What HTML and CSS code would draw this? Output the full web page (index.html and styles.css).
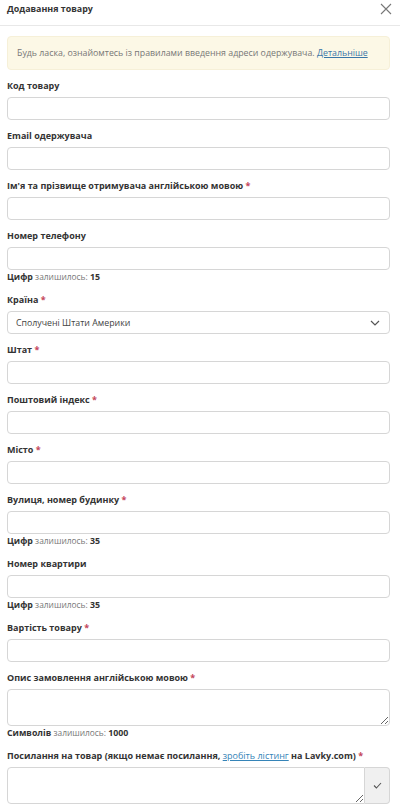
FILE: index.html
```html
<!DOCTYPE html>
<html lang="uk">
<head>
<meta charset="utf-8">
<title>Додавання товару</title>
<link rel="stylesheet" href="styles.css">
</head>
<body>
<div class="modal">
  <div class="modal-header">
    <div class="modal-title">Додавання товару</div>
    <button class="close" type="button" aria-label="Закрити">
      <svg width="12" height="12" viewBox="0 0 12 12"><path d="M1 1L11 11M11 1L1 11" stroke="#777" stroke-width="1.1" fill="none"/></svg>
    </button>
  </div>
  <div class="modal-body">
    <div class="alert">Будь ласка, ознайомтесь із правилами введення адреси одержувача. <a href="#">Детальніше</a></div>

    <div class="group">
      <label class="label">Код товару</label>
      <input class="input" type="text">
    </div>
    <div class="group">
      <label class="label">Email одержувача</label>
      <input class="input" type="text">
    </div>
    <div class="group">
      <label class="label">Ім'я та прізвище отримувача англійською мовою <span class="req">*</span></label>
      <input class="input" type="text">
    </div>
    <div class="group">
      <label class="label">Номер телефону</label>
      <input class="input" type="text">
      <div class="help"><b>Цифр</b> залишилось: <b>15</b></div>
    </div>
    <div class="group">
      <label class="label">Країна <span class="req">*</span></label>
      <div class="select">
        <span>Сполучені Штати Америки</span>
        <svg width="10" height="6" viewBox="0 0 10 6"><path d="M1 1L5 5L9 1" stroke="#555" stroke-width="1.2" fill="none"/></svg>
      </div>
    </div>
    <div class="group">
      <label class="label">Штат <span class="req">*</span></label>
      <input class="input" type="text">
    </div>
    <div class="group">
      <label class="label">Поштовий індекс <span class="req">*</span></label>
      <input class="input" type="text">
    </div>
    <div class="group">
      <label class="label">Місто <span class="req">*</span></label>
      <input class="input" type="text">
    </div>
    <div class="group">
      <label class="label">Вулиця, номер будинку <span class="req">*</span></label>
      <input class="input" type="text">
      <div class="help"><b>Цифр</b> залишилось: <b>35</b></div>
    </div>
    <div class="group">
      <label class="label">Номер квартири</label>
      <input class="input" type="text">
      <div class="help"><b>Цифр</b> залишилось: <b>35</b></div>
    </div>
    <div class="group">
      <label class="label">Вартість товару <span class="req">*</span></label>
      <input class="input" type="text">
    </div>
    <div class="group">
      <label class="label">Опис замовлення англійською мовою <span class="req">*</span></label>
      <textarea class="input area"></textarea>
      <div class="help"><b>Символів</b> залишилось: <b>1000</b></div>
    </div>
    <div class="group">
      <label class="label">Посилання на товар (якщо немає посилання, <a href="#" class="inline-link">зробіть лістинг</a> на Lavky.com) <span class="req">*</span></label>
      <div class="input-group">
        <textarea class="input area grouped"></textarea>
        <button class="addon" type="button">
          <svg width="9" height="7" viewBox="0 0 9 7"><path d="M1 3.5L3.4 6L8 1" stroke="#555" stroke-width="1.1" fill="none"/></svg>
        </button>
      </div>
    </div>
  </div>
</div>
</body>
</html>
```

FILE: styles.css
```css
* { box-sizing: border-box; }
html, body { margin: 0; padding: 0; background: #fff; }
body {
  font-family: "Open Sans", "Noto Sans", "DejaVu Sans", sans-serif;
  font-size: 9px;
  color: #333;
}
.modal-header {
  display: flex;
  align-items: flex-start;
  justify-content: space-between;
  height: 26px;
  padding: 1px 8px 0 7px;
  border-bottom: 1px solid #e8e8e8;
}
.modal-title {
  font-weight: 700;
  font-size: 8.9px;
  line-height: 16px;
  color: #333;
}
.close {
  border: 0;
  background: none;
  padding: 0;
  margin-top: 2px;
  width: 12px;
  height: 12px;
  display: flex;
}
.modal-body {
  padding: 10px 10px 0 7px;
}
.alert {
  background: #fcf8e6;
  border: 1px solid #f6f0d8;
  border-radius: 4px;
  padding: 9px 9px;
  line-height: 14px;
  font-size: 8.8px;
  color: #777;
  margin-bottom: 8px;
}
.alert a { color: #3a76a8; text-decoration: underline; }
.group {
  display: flex;
  flex-direction: column;
  margin-bottom: 8px;
}
.label {
  font-weight: 700;
  line-height: 16px;
  margin-bottom: 3px;
  color: #333;
}
.req { color: #c4455a; }
.inline-link {
  color: #3584b8;
  font-weight: 400;
  text-decoration: underline;
}
.input {
  display: block;
  width: 100%;
  height: 23px;
  border: 1px solid #d6d6d6;
  border-radius: 4px;
  background: #fff;
  font: inherit;
  padding: 2px 7px;
  margin: 0;
}
.area {
  height: 37px;
  resize: vertical;
}
.help {
  line-height: 14px;
  font-size: 8.4px;
  color: #777;
}
.help b { color: #333; font-weight: 700; font-size: 8.8px; }
.select {
  display: flex;
  align-items: center;
  justify-content: space-between;
  height: 23px;
  border: 1px solid #d6d6d6;
  border-radius: 4px;
  padding: 0 9px 0 8px;
  font-size: 8.8px;
  color: #444;
}
.input-group {
  display: flex;
}
.grouped {
  flex: 1;
  border-radius: 4px 0 0 4px;
}
.addon {
  width: 25px;
  height: 37px;
  border: 1px solid #d6d6d6;
  border-left: 0;
  border-radius: 0 4px 4px 0;
  background: #f0f0f0;
  display: flex;
  align-items: center;
  justify-content: center;
  padding: 0;
}
```
